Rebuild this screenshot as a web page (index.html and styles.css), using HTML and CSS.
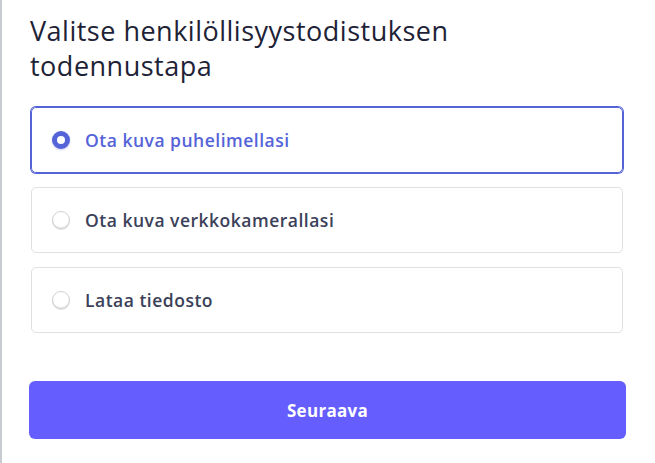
FILE: index.html
```html
<!DOCTYPE html>
<html lang="fi">
<head>
<meta charset="utf-8">
<link rel="stylesheet" href="styles.css">
</head>
<body>
<div class="page">
  <h1 class="title">Valitse henkilöllisyystodistuksen todennustapa</h1>
  <div class="options">
    <label class="option selected"><span class="radio"></span><span class="label">Ota kuva puhelimellasi</span></label>
    <label class="option"><span class="radio"></span><span class="label">Ota kuva verkkokamerallasi</span></label>
    <label class="option"><span class="radio"></span><span class="label">Lataa tiedosto</span></label>
  </div>
  <button class="next">Seuraava</button>
</div>
</body>
</html>
```
FILE: styles.css
```css
html, body {
  margin: 0;
  padding: 0;
  background: #fff;
}
body {
  font-family: "Open Sans", "Noto Sans", sans-serif;
  width: 655px;
  height: 463px;
  overflow: hidden;
}
.page {
  border-left: 2px solid #c9ccd3;
  height: 463px;
  box-sizing: border-box;
  padding: 13px 29px 0 28px;
}
.title {
  margin: 0;
  font-weight: 400;
  font-size: 27px;
  letter-spacing: 0.5px;
  line-height: 35px;
  color: #1e2236;
  width: 500px;
}
.options {
  display: flex;
  flex-direction: column;
  gap: 14px;
  margin: 24px 3px 0 1px;
}
.option {
  display: flex;
  align-items: center;
  height: 66px;
  box-sizing: border-box;
  border: 1px solid #e0e0e0;
  border-radius: 5px;
  padding-left: 20px;
}
.option.selected {
  border-color: #5563d8;
  box-shadow: 0 0 0 1px #5563d8;
}
.radio {
  width: 18px;
  height: 18px;
  box-sizing: border-box;
  border-radius: 50%;
  border: 1px solid #d2d2d2;
  box-shadow: inset 0 -1px 1px rgba(0,0,0,0.08), 0 1px 1px rgba(0,0,0,0.12);
  background: #fff;
  flex: none;
}
.selected .radio {
  border: 5.5px solid #5563d8;
  box-shadow: 0 1px 2px rgba(85,99,216,0.3);
}
.label {
  margin-left: 15px;
  font-size: 17.5px;
  letter-spacing: 0.5px;
  font-weight: 600;
  color: #3b4159;
}
.selected .label {
  color: #5563d8;
}
.next {
  display: block;
  width: 597px;
  height: 58px;
  margin: 48px 0 0 -1px;
  border: none;
  border-radius: 6px;
  background: #655dfe;
  color: #fff;
  font-family: "Open Sans", "Noto Sans", sans-serif;
  font-size: 17px;
  letter-spacing: 0.3px;
  font-weight: 700;
}
```
